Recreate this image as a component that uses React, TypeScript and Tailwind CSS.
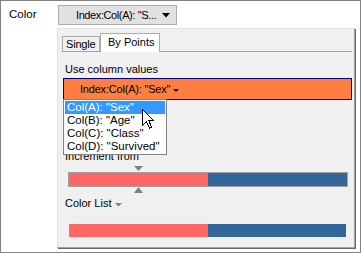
import React from 'react';

const columns = ['Col(A): "Sex"', 'Col(B): "Age"', 'Col(C): "Class"', 'Col(D): "Survived"'];

function Cursor() {
  return (
    <svg width="13" height="20" viewBox="0 0 13 20" className="absolute left-[141px] top-[108px] z-20">
      <path
        d="M0.5 0.5 L0.5 16.5 L4.5 12.5 L7.5 19 L9.5 18 L6.8 11.8 L12 11.8 Z"
        fill="white"
        stroke="black"
        strokeWidth="1"
        shapeRendering="crispEdges"
      />
    </svg>
  );
}

export default function App() {
  return (
    <div
      className="relative w-[361px] h-[253px] bg-white border border-[#828282] flex text-[11px] leading-[15px] text-black overflow-hidden whitespace-nowrap"
      style={{ fontFamily: '"Liberation Sans", Arial, sans-serif' }}
    >
      <div className="w-[56px] pl-[8px] pt-[6px] text-[11.5px]">Color</div>

      <div className="flex flex-col">
        <button className="mt-[4px] ml-[1px] w-[119px] h-[20px] bg-[#e1e1e1] border border-[#adadad] flex items-center pl-[17px] pr-[6px]">
          <span className="shrink-0 tracking-[-0.4px]">Index:Col(A): "S...</span>
          <svg width="8" height="5" viewBox="0 0 8 5" className="shrink-0 ml-auto">
            <path d="M0 0 H8 L4 4.5 Z" fill="black" />
          </svg>
        </button>

        <div className="mt-[3px] w-[298px] h-[220px] bg-[#f0f0f0] border-t border-l border-[#e3e3e3] border-r border-r-[#a0a0a0] border-b border-b-[#a0a0a0] shadow-[1px_1px_0_#696969] flex flex-col">
          {/* tabs */}
          <div className="h-[23px] ml-[4px] mr-[2px] border-b border-[#a0a0a0] flex items-end">
            <div className="h-[15px] w-[38px] border border-b-0 border-[#adadad] bg-[#f0f0f0] pl-[3px] leading-[14px] tracking-[-0.2px]">
              Single
            </div>
            <div className="h-[19px] w-[60px] -mb-px border border-b-0 border-[#adadad] bg-white pl-[7px] pt-[1px]">
              By Points
            </div>
          </div>

          <div className="pl-[7px] mt-[10px]">Use column values</div>

          <div className="relative mt-[1px] ml-[5px] mr-[2px] h-[22px] bg-[#fe7f40] border border-[#000080] flex items-center pl-[16px]">
            <span className="tracking-[-0.2px]">Index:Col(A): "Sex"</span>
            <svg width="6" height="4" viewBox="0 0 6 4" className="ml-[3px] mt-[4px]">
              <path d="M0 0 H6 L3 3 Z" fill="#000080" />
            </svg>

            <div className="absolute left-[-1px] top-full w-[104px] bg-white border border-[#828282] py-[1px] z-10 text-[11.5px]">
              {columns.map((c, i) => (
                <div
                  key={c}
                  className={
                    i === 0
                      ? 'h-[13px] mx-[1px] pl-[2px] leading-[13px] bg-[#3399ff] text-white'
                      : 'h-[13px] mx-[1px] pl-[2px] leading-[13px]'
                  }
                >
                  {c}
                </div>
              ))}
            </div>
          </div>

          <div className="pl-[7px] mt-[49px]">Increment from</div>

          <div className="ml-[10px] w-[280px] mt-[2px]">
            <div className="h-[6px] relative">
              <svg width="9" height="6" viewBox="0 0 9 6" className="absolute left-[66px] top-0">
                <path d="M0 0 H9 L4.5 5 Z" fill="#808080" />
              </svg>
            </div>
            <div className="h-[15px] border border-[#a0a0a0] flex">
              <div className="w-[139px] bg-[#ff6666]" />
              <div className="flex-1 bg-[#336699]" />
            </div>
            <div className="h-[6px] relative">
              <svg width="9" height="6" viewBox="0 0 9 6" className="absolute left-[66px] top-0">
                <path d="M4.5 0 L9 6 H0 Z" fill="#808080" />
              </svg>
            </div>
          </div>

          <div className="pl-[7px] mt-[3px] flex items-center">
            <span>Color List</span>
            <svg width="7" height="4" viewBox="0 0 7 4" className="ml-[4px] mt-[2px]">
              <path d="M0 0 H7 L3.5 3.5 Z" fill="#808080" />
            </svg>
          </div>

          <div className="ml-[11px] w-[277px] h-[13px] mt-[13px] flex">
            <div className="w-[139px] bg-[#ff6666]" />
            <div className="flex-1 bg-[#336699]" />
          </div>
        </div>
      </div>

      <Cursor />
    </div>
  );
}
